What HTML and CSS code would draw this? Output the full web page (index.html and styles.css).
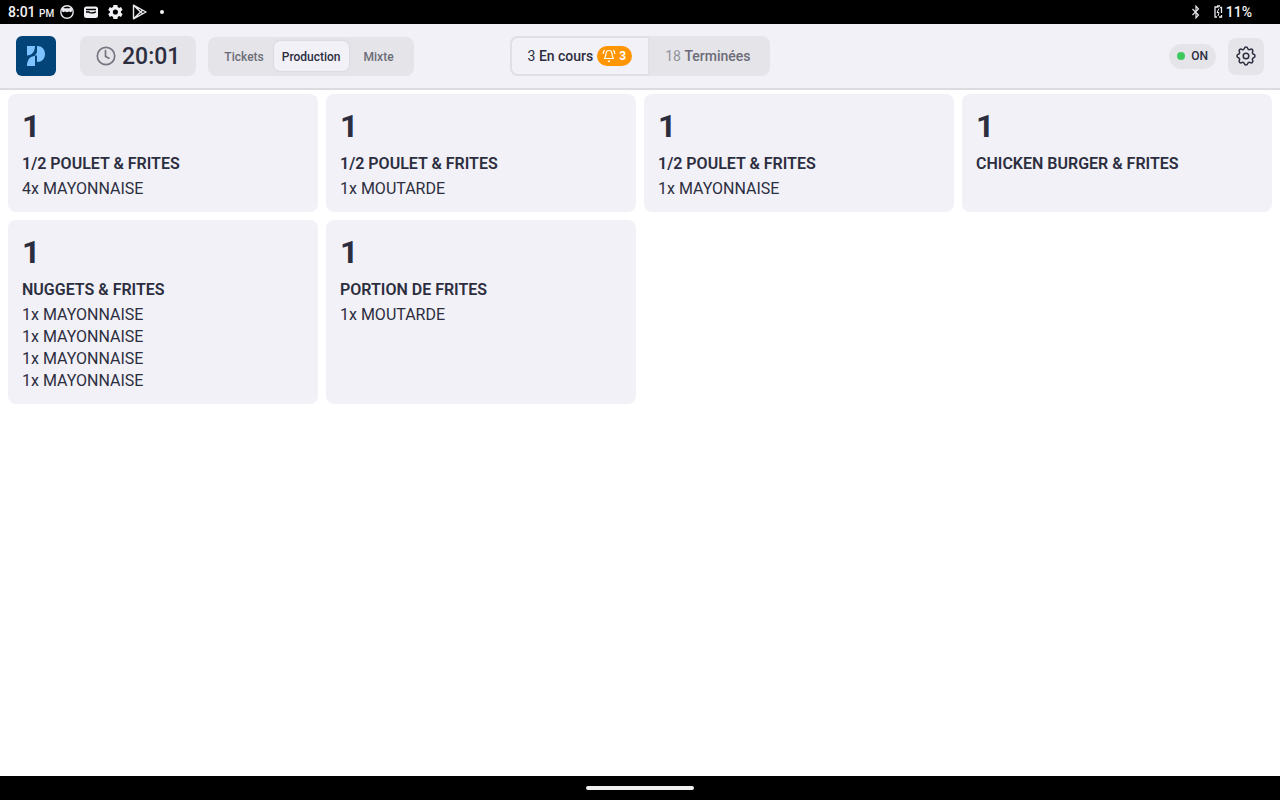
FILE: index.html
```html
<!DOCTYPE html>
<html lang="fr">
<head>
<meta charset="utf-8">
<meta name="viewport" content="width=device-width, initial-scale=1">
<title>Production</title>
<link rel="stylesheet" href="styles.css">
</head>
<body>
<div class="status-bar">
  <div class="status-group">
    <span class="status-time">8:01 <small>PM</small></span>
    <svg width="16" height="16" viewBox="0 0 16 16" aria-hidden="true"><circle cx="8" cy="8" r="6.200" fill="none" stroke="#e8e8ee" stroke-width="1.400"/><path d="M3.300 3l2 1.200h5.400l2-1.200.6 4-1.500 1.300-1.800-.8-2 .8-2-.8-1.800.8L2.700 7z" fill="#e8e8ee"/></svg>
    <svg width="16" height="16" viewBox="0 0 16 16" aria-hidden="true"><rect x="1" y="2.500" width="14" height="11.500" rx="2.500" fill="#f2f2f6"/><path d="M3 5.500h10M3 8h3c.5 1.300 3.500 1.300 7-.2" stroke="#000" stroke-width="1.300" fill="none"/></svg>
    <svg width="16" height="16" viewBox="2 2 20 20" aria-hidden="true"><path fill="#f2f2f6" fill-rule="evenodd" d="M19.400 13a7.500 7.500 0 0 0 0-2l2.100-1.600-2-3.500-2.500 1a7.600 7.600 0 0 0-1.700-1L15 3.200h-5l-.4 2.700a7.600 7.600 0 0 0-1.700 1l-2.400-1-2 3.500L5.600 11a7.500 7.500 0 0 0 0 2l-2.100 1.600 2 3.500 2.400-1a7.600 7.600 0 0 0 1.700 1l.4 2.700h5l.4-2.700a7.600 7.600 0 0 0 1.700-1l2.400 1 2-3.500zM12.500 15.200a3.200 3.200 0 1 1 0-6.400 3.200 3.200 0 0 1 0 6.400z"/></svg>
    <svg width="16" height="16" viewBox="0 0 16 16" aria-hidden="true"><path d="M2.500 1.200v13.600L15 8zM2.500 1.200l9 8.600M2.500 14.800l9-8.600" fill="none" stroke="#e8e8ee" stroke-width="1.400" stroke-linejoin="round"/></svg>
    <span class="status-dot"></span>
  </div>
  <div class="status-group status-right">
    <svg width="10" height="14" viewBox="0 0 10 14" aria-hidden="true"><path d="M1.500 4l6 6L5 12.800V1.200L7.500 4l-6 6" fill="none" stroke="#e8e8ee" stroke-width="1.200"/></svg>
    <span class="battery"><svg width="10" height="14" viewBox="0 0 10 14" aria-hidden="true"><path d="M4 1h3M5.500 2H2v10h2M7 2.500h1.500V8M8.500 10v2H6" fill="none" stroke="#e8e8ee" stroke-width="1.300"/><path d="M6 3.500L4 7.500h2L5 11" fill="none" stroke="#e8e8ee"/></svg>11%</span>
  </div>
</div>

<header class="toolbar">
  <div class="toolbar-start">
    <svg class="logo" width="40" height="40" viewBox="0 0 40 40" role="img" aria-label="Logo"><rect width="40" height="40" rx="6" fill="#024378"/><path d="M11 10h8c0 5.500-3 9.500-8 9.500zM19 20v10h-8c0-6 3-10 8-10zM21 10c5 0 8 3.300 8 8 0 4.500-3 8-8 8v-6.500h-3c2-1 3-2.500 3-4.500z" fill="#7cc3ff"/></svg>
    <div class="clock">
      <svg width="20" height="20" viewBox="0 0 20 20" fill="none" stroke="#757581" stroke-width="1.700" stroke-linecap="round" stroke-linejoin="round" aria-hidden="true"><circle cx="10" cy="10" r="8.700"/><path d="M9.500 4.500v6l3.500 1.700"/></svg>
      <time datetime="20:01">20:01</time>
    </div>
    <nav class="modes" aria-label="Affichage">
      <button type="button">Tickets</button>
      <button type="button" class="selected" aria-pressed="true">Production</button>
      <button type="button">Mixte</button>
    </nav>
  </div>
  <div class="filters">
    <button type="button" class="filter active" aria-pressed="true"><span>3 <b>En cours</b></span>
      <span class="alert"><svg width="14" height="14" viewBox="0 0 14 14" fill="none" stroke="#fff" stroke-width="1.200" stroke-linecap="round" stroke-linejoin="round" aria-hidden="true"><path d="M7 1.500c2.100 0 3 1.500 3 3.300 0 2.300.5 3.300 1.500 4.700h-9C3.500 8.100 4 7.100 4 4.800 4 3 4.900 1.500 7 1.500z"/><path d="M6.300 12h1.400l-.7.600zM2.300 1.500C1.500 2.300 1.200 3.300 1.200 4.500M11.700 1.500c.8.800 1.100 1.800 1.100 3"/></svg>3</span>
    </button>
    <button type="button" class="filter"><span><i>18</i> <b>Terminées</b></span></button>
  </div>
  <div class="toolbar-end">
    <span class="online" role="status">ON</span>
    <button type="button" class="settings" aria-label="Paramètres">
      <svg width="24" height="24" viewBox="0 0 24 24" fill="none" stroke="#2c2e40" stroke-width="1.500" stroke-linejoin="round" aria-hidden="true"><path d="M10.325 4.317c.426-1.756 2.924-1.756 3.350 0a1.724 1.724 0 0 0 2.573 1.066c1.543-.94 3.310.826 2.370 2.370a1.724 1.724 0 0 0 1.065 2.572c1.756.426 1.756 2.924 0 3.350a1.724 1.724 0 0 0-1.066 2.573c.94 1.543-.826 3.310-2.370 2.370a1.724 1.724 0 0 0-2.572 1.065c-.426 1.756-2.924 1.756-3.350 0a1.724 1.724 0 0 0-2.573-1.066c-1.543.94-3.310-.826-2.370-2.370a1.724 1.724 0 0 0-1.065-2.572c-1.756-.426-1.756-2.924 0-3.350a1.724 1.724 0 0 0 1.066-2.573c-.94-1.543.826-3.310 2.370-2.370 1 .608 2.296.07 2.572-1.065z"/><circle cx="12" cy="12" r="2.800"/></svg>
    </button>
  </div>
</header>

<main class="board">
  <article class="card"><strong class="qty">1</strong><h2>1/2 POULET &amp; FRITES</h2><ul><li>4x MAYONNAISE</li></ul></article>
  <article class="card"><strong class="qty">1</strong><h2>1/2 POULET &amp; FRITES</h2><ul><li>1x MOUTARDE</li></ul></article>
  <article class="card"><strong class="qty">1</strong><h2>1/2 POULET &amp; FRITES</h2><ul><li>1x MAYONNAISE</li></ul></article>
  <article class="card"><strong class="qty">1</strong><h2>CHICKEN BURGER &amp; FRITES</h2></article>
  <article class="card"><strong class="qty">1</strong><h2>NUGGETS &amp; FRITES</h2><ul><li>1x MAYONNAISE</li><li>1x MAYONNAISE</li><li>1x MAYONNAISE</li><li>1x MAYONNAISE</li></ul></article>
  <article class="card"><strong class="qty">1</strong><h2>PORTION DE FRITES</h2><ul><li>1x MOUTARDE</li></ul></article>
</main>

<footer class="nav-bar"><span class="handle"></span></footer>
</body>
</html>
```
FILE: styles.css
```css
* { box-sizing: border-box; }

body {
  margin: 0;
  min-height: 100vh;
  display: flex;
  flex-direction: column;
  background: #fff;
  color: #2c2e40;
  font-family: Roboto, "Liberation Sans", sans-serif;
  font-size: 16px;
}

button {
  border: 0;
  margin: 0;
  background: none;
  color: inherit;
  font: inherit;
  cursor: pointer;
}

svg { display: block; flex: none; }

.status-bar {
  display: flex;
  justify-content: space-between;
  height: 24px;
  padding: 0 28px 0 8px;
  background: #000;
  color: #f2f2f6;
  font-size: 14px;
  font-weight: 500;
}

.status-group { display: flex; align-items: center; gap: 8px; }
.status-time { margin-right: -3px; }
.status-time small { font-size: 10px; }
.status-dot { width: 4px; height: 4px; margin-left: 5px; border-radius: 50%; background: #f2f2f6; }
.status-right { gap: 12px; }
.battery { display: flex; align-items: center; gap: 3px; }

.toolbar {
  display: grid;
  grid-template-columns: 1fr auto 1fr;
  align-items: center;
  height: 66px;
  padding: 0 16px;
  background: #f2f1f7;
  border-bottom: 2px solid #dcdbe0;
}

.toolbar-start, .toolbar-end { display: flex; align-items: center; gap: 12px; }
.toolbar-end { justify-content: flex-end; }
.logo { margin-right: 12px; }

.clock {
  display: flex;
  align-items: center;
  gap: 6px;
  height: 40px;
  padding: 0 16px;
  border-radius: 8px;
  background: #e5e4e9;
  font-size: 23px;
  font-weight: 500;
}

.modes {
  display: flex;
  align-items: center;
  height: 39px;
  padding: 0 12px 0 8px;
  border-radius: 8px;
  background: #e5e4e9;
  color: #6b6c77;
  font-size: 12px;
  font-weight: 500;
}

.modes button { height: 30px; padding: 2px 8px 0; border-radius: 6px; }
.modes .selected {
  margin: 0 7px 0 2px;
  background: #f2f1f7;
  color: #2c2e40;
  box-shadow: 0 0 2px #c4c3ca;
}

.filters {
  display: flex;
  height: 40px;
  border-radius: 8px;
  background: #e5e4e9;
  font-size: 14px;
}

.filter {
  display: flex;
  align-items: center;
  gap: 4px;
  padding: 0 20px 0 16px;
  color: #6b6c77;
}
.filter b { font-weight: 500; }
.filter i { font-style: normal; color: #92929c; }
.filter.active {
  padding: 0 16px;
  border: 2px solid #e0dfe4;
  border-right-width: 1px;
  border-radius: 8px 0 0 8px;
  background: #f2f1f7;
  color: #2c2e40;
}

.alert {
  display: flex;
  align-items: center;
  gap: 3px;
  height: 20px;
  padding: 0 6px 0 5px;
  border-radius: 10px;
  background: #ff9500;
  color: #fff;
  font-size: 12px;
  font-weight: 700;
}

.online {
  display: flex;
  align-items: center;
  gap: 6px;
  height: 25px;
  padding: 0 8px;
  border-radius: 13px;
  background: #e5e4e9;
  font-size: 12px;
  font-weight: 500;
}
.online::before { content: ""; width: 8px; height: 8px; border-radius: 50%; background: #3bca5b; }

.settings {
  display: grid;
  place-items: center;
  width: 36px;
  height: 37px;
  padding: 0;
  border-radius: 8px;
  background: #e5e4e9;
}

.board {
  flex: 1;
  display: grid;
  grid-template-columns: repeat(4, minmax(0, 1fr));
  align-content: start;
  gap: 8px;
  padding: 4px 8px;
}

.card {
  padding: 14px 14px 12px;
  border-radius: 8px;
  background: #f2f1f7;
  line-height: 22px;
}
.card .qty { display: block; font-size: 32px; line-height: 36px; }
.card h2 { margin: 9px 0 3px; font-size: 16px; font-weight: 600; }
.card ul { margin: 0; padding: 0; list-style: none; }

.nav-bar {
  display: flex;
  align-items: center;
  justify-content: center;
  height: 24px;
  background: #000;
}
.handle { width: 108px; height: 4px; border-radius: 2px; background: #f0f0f0; }
```
